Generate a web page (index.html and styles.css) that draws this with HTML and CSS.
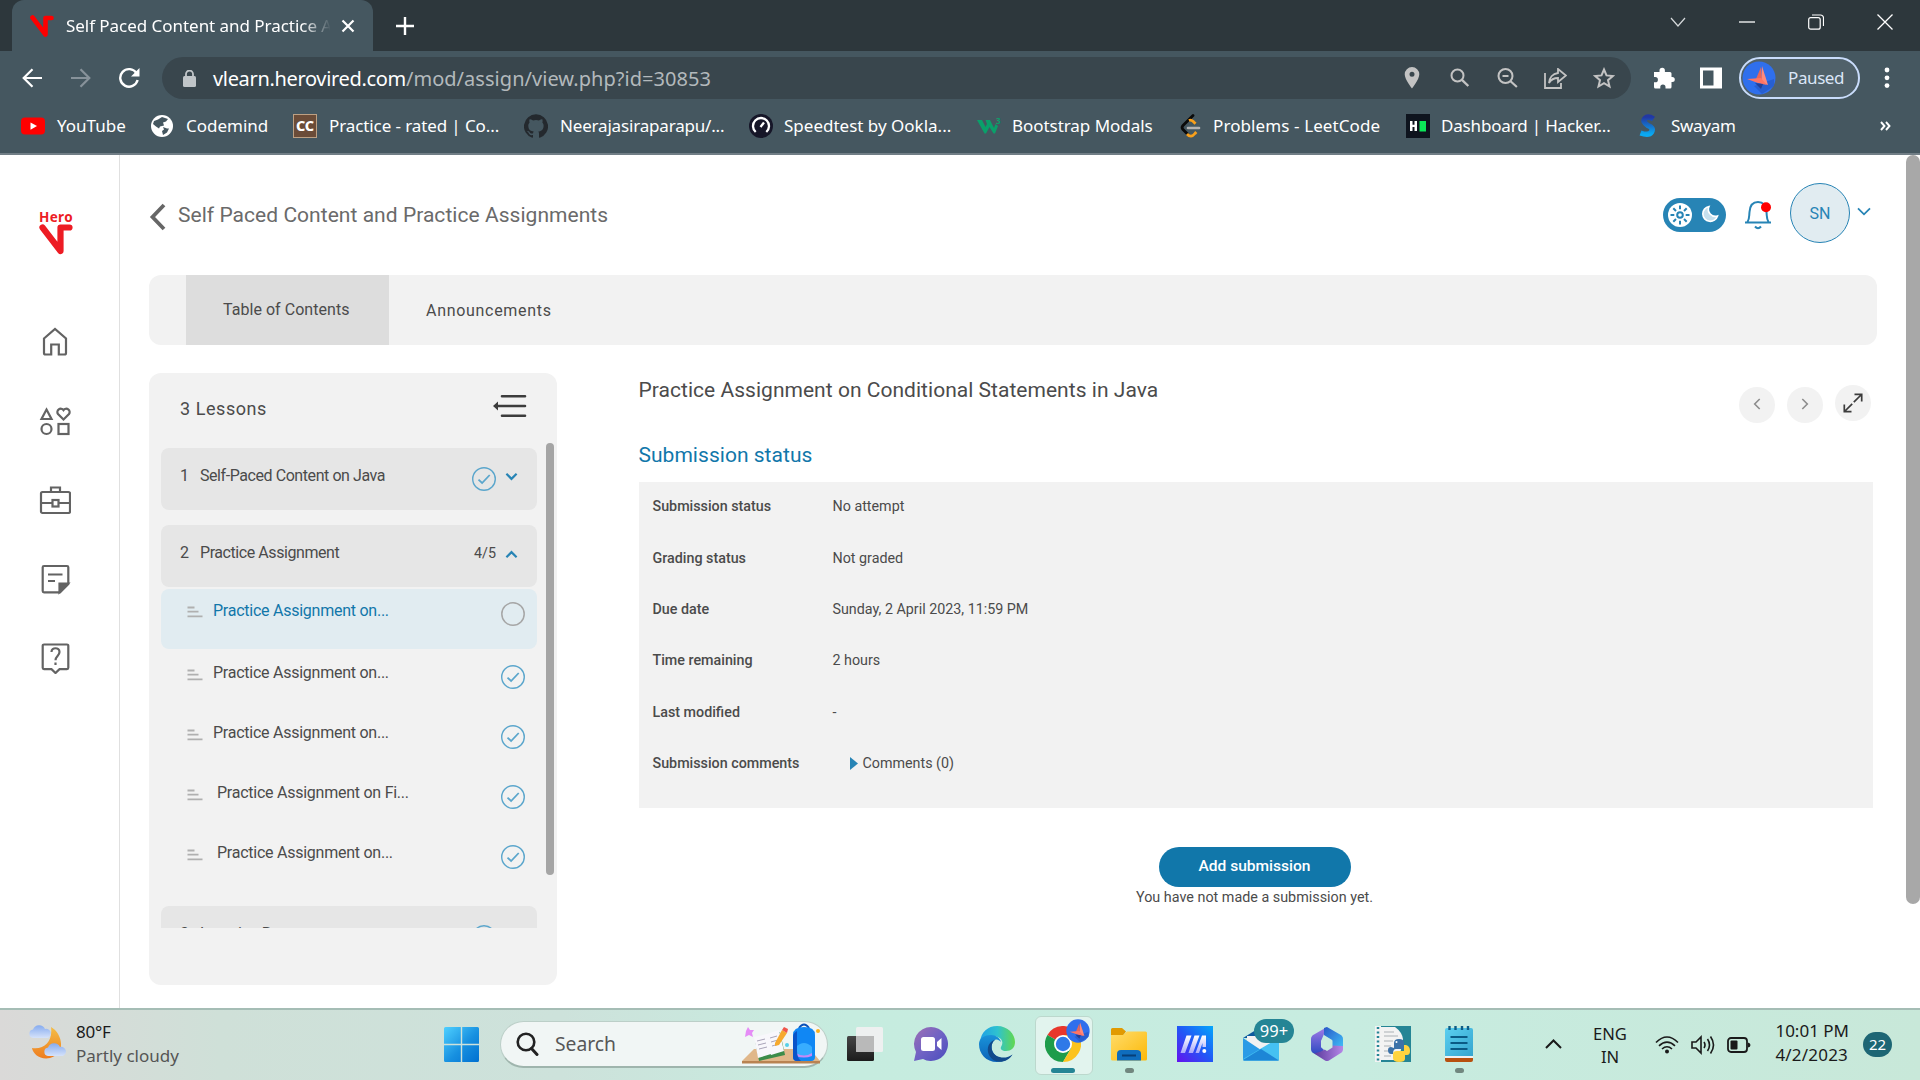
FILE: index.html
```
<!DOCTYPE html>
<html lang="en">
<head>
<meta charset="utf-8">
<title>Self Paced Content and Practice Assignments</title>
<link rel="stylesheet" href="styles.css">
</head>
<body>
<svg class="defs" width="0" height="0" aria-hidden="true">
  <symbol id="done" viewBox="0 0 24 24"><circle cx="12" cy="12" r="11.3" fill="none" stroke="#5ba6cc" stroke-width="1.4"/><path d="M6.5 12.6l3.6 3.4 7.6-8" fill="none" stroke="#5ba6cc" stroke-width="1.8"/></symbol>
  <symbol id="todo" viewBox="0 0 24 24"><circle cx="12" cy="12" r="11.2" fill="none" stroke="#a6a6a6" stroke-width="1.5"/></symbol>
  <symbol id="lines" viewBox="0 0 16 12"><path d="M.5 1.5h7M.5 5.7h11M.5 10.3h15" stroke="#b0b0b0" stroke-width="1.8" fill="none"/></symbol>
  <symbol id="bird" viewBox="0 0 34 34"><circle cx="17" cy="17" r="16.5" fill="#2f6fed"/><path d="M12 25l20-7v7L20 33z" fill="#285fd0"/><path d="M20 5l6 19-7-3z" fill="#ff8a7a"/><path d="M19 6l-5 12 6 5z" fill="#e8665a"/><path d="M5 18l14-1 6 7-9-2z" fill="#ff7464"/><path d="M13 22l8 1-2 5z" fill="#233f96"/></symbol>
</svg>

<header class="browser">
  <div class="tabstrip">
    <div class="tab">
      <svg width="24" height="22" viewBox="0 0 24 22"><path d="M2.5 2.5l13 17V3h6" fill="none" stroke="#fe0000" stroke-width="4.6" stroke-linecap="round" stroke-linejoin="round"/></svg>
      <span class="tab-title">Self Paced Content and Practice Assignments</span>
      <svg width="14" height="14" viewBox="0 0 14 14"><path d="M1.5 1.5l11 11M12.5 1.5l-11 11" stroke="#fff" stroke-width="2.2"/></svg>
    </div>
    <svg class="new-tab" width="18" height="18" viewBox="0 0 18 18"><path d="M9 0v18M0 9h18" stroke="#fff" stroke-width="2.4"/></svg>
    <div class="window-buttons">
      <svg width="16" height="16" viewBox="0 0 16 16"><path d="M1 4l7 8 7-8" fill="none" stroke="#d5d9db" stroke-width="1.2"/></svg>
      <svg width="16" height="16" viewBox="0 0 16 16"><path d="M0 8h16" stroke="#fff" stroke-width="1.3"/></svg>
      <svg width="16" height="16" viewBox="0 0 16 16"><rect x=".7" y="3.7" width="11.5" height="11.5" rx="2" fill="none" stroke="#fff" stroke-width="1.2"/><path d="M4 1h8.5a3 3 0 013 3v8" fill="none" stroke="#fff" stroke-width="1.2"/></svg>
      <svg width="16" height="16" viewBox="0 0 16 16"><path d="M.5.5l15 15M15.5.5l-15 15" stroke="#fff" stroke-width="1.3"/></svg>
    </div>
  </div>

  <div class="toolbar">
    <div class="nav">
      <svg width="21" height="20" viewBox="0 0 21 20"><path d="M20 10H2M10.5 1.2L1.7 10l8.800 8.800" fill="none" stroke="#fff" stroke-width="2.2"/></svg>
      <svg width="21" height="20" viewBox="0 0 21 20"><path d="M1 10h18M10.500 1.200l8.800 8.800-8.800 8.800" fill="none" stroke="#87929a" stroke-width="2.2"/></svg>
      <svg width="22" height="22" viewBox="0 0 22 22"><path d="M18.500 6.200A8.800 8.800 0 1019.600 13" fill="none" stroke="#fff" stroke-width="2.4"/><path d="M21.500 1v8.500H13z" fill="#fff"/></svg>
    </div>
    <div class="omnibox">
      <svg width="13" height="17" viewBox="0 0 13 17"><rect y="6" width="13" height="11" rx="1.500" fill="#c0c5c8"/><path d="M3 7V4a3.500 3.500 0 017 0v3" fill="none" stroke="#c0c5c8" stroke-width="1.800"/></svg>
      <div class="url"><span class="host">vlearn.herovired.com</span><span class="path">/mod/assign/view.php?id=30853</span></div>
      <div class="omni-icons">
        <svg width="20" height="22" viewBox="0 0 20 22"><path fill-rule="evenodd" d="M10 0a7.300 7.300 0 00-7.300 7.300c0 5.200 7.300 14.200 7.300 14.200s7.300-9 7.300-14.200A7.300 7.300 0 0010 0zm0 4.800a2.500 2.500 0 110 5 2.500 2.500 0 010-5z" fill="#c3c3c3"/></svg>
        <svg width="20" height="20" viewBox="0 0 20 20"><circle cx="7.500" cy="7.500" r="6" fill="none" stroke="#c3c3c3" stroke-width="2"/><path d="M11.700 11.700l6.600 6.300" stroke="#c3c3c3" stroke-width="2.400"/></svg>
        <svg width="22" height="20" viewBox="0 0 22 20"><circle cx="9.500" cy="8" r="7" fill="none" stroke="#c3c3c3" stroke-width="2"/><path d="M14.300 13l6.600 6M6.500 8h6" stroke="#c3c3c3" stroke-width="2.200"/></svg>
        <svg width="23" height="21" viewBox="0 0 23 21"><path d="M1 5v15h16v-5M14 1l8 6.500-8 6.500v-4c-4 0-7 1.500-9 5 .3-5 3.500-9.200 9-10z" fill="none" stroke="#c3c3c3" stroke-width="1.800"/></svg>
        <svg width="22" height="22" viewBox="0 0 22 22"><path d="M11 2.500l2.500 5.900 6.400.6-4.900 4.200 1.500 6.300-5.500-3.400-5.500 3.400L7 13.200 2.100 9l6.400-.6z" fill="none" stroke="#c3c3c3" stroke-width="2"/></svg>
      </div>
    </div>
    <svg class="puzzle" width="22" height="22" viewBox="0 0 22 22"><path d="M1 5h5.500V3.500a2.700 2.700 0 015.400 0V5H17a1.500 1.500 0 011.500 1.500V10h.8a2.500 2.500 0 010 5h-.8v5a1.500 1.500 0 01-1.500 1.500h-4.500V20a2.600 2.600 0 00-5.200 0v1.500H2.500A1.500 1.500 0 011 20v-4.700h1.300a2.600 2.600 0 000-5.200H1z" fill="#fff"/></svg>
    <svg width="22" height="22" viewBox="0 0 22 22"><path fill-rule="evenodd" d="M0 .5h22v21H0zM3 3.500v15h10.500v-15z" fill="#fff"/></svg>
    <div class="profile"><svg width="34" height="34"><use href="#bird"/></svg><span>Paused</span></div>
    <svg class="kebab" width="6" height="22" viewBox="0 0 6 22"><circle cx="3" cy="3" r="2.400" fill="#fff"/><circle cx="3" cy="10.800" r="2.400" fill="#fff"/><circle cx="3" cy="18.600" r="2.400" fill="#fff"/></svg>
  </div>

  <nav class="bookmarks">
    <a class="bm bm-youtube"><svg width="24" height="24" viewBox="0 0 24 24"><rect y="3.500" width="24" height="17" rx="4" fill="#f00"/><path d="M9.500 8.500l6.500 3.600-6.500 3.600z" fill="#fff"/></svg><span>YouTube</span></a>
    <a class="bm bm-codemind"><svg width="24" height="24" viewBox="0 0 24 24"><circle cx="12" cy="12" r="11" fill="#fff"/><path d="M12 3l6 2-2 2.500-3 1 1 3-4 1-1 2-3-2-3-2.500 1-3 4-1.500zM13 13l4 1.500 2 0-2 4-4 2.500-1-4 2-1.500z" fill="#455760"/></svg><span>Codemind</span></a>
    <a class="bm bm-codechef"><svg width="24" height="24" viewBox="0 0 24 24"><rect width="24" height="24" fill="#bda083"/><rect x="1" y="1" width="22" height="22" fill="#6b4c38"/><text x="12" y="17" text-anchor="middle" font-family="Noto Sans, sans-serif" font-size="14.500" font-weight="800" fill="#fff">CC</text></svg><span>Practice - rated | Co...</span></a>
    <a class="bm bm-github"><svg width="24" height="24" viewBox="0 0 24 24"><path d="M12 .3a12 12 0 00-3.800 23.400c.6.100.8-.3.800-.6v-2c-3.300.7-4-1.600-4-1.600-.6-1.400-1.400-1.800-1.400-1.800-1-.7.100-.7.100-.7 1.200 0 1.900 1.200 1.900 1.200 1 1.800 2.800 1.300 3.500 1 0-.8.400-1.300.7-1.600-2.700-.3-5.500-1.300-5.500-6 0-1.200.5-2.300 1.300-3.100-.2-.4-.6-1.600 0-3.200 0 0 1-.3 3.400 1.200a11.500 11.500 0 016 0c2.300-1.500 3.300-1.200 3.300-1.200.6 1.600.2 2.800 0 3.200.9.800 1.300 1.900 1.300 3.200 0 4.600-2.800 5.600-5.500 5.900.5.400.9 1 .9 2.200v3.300c0 .3.100.7.800.6A12 12 0 0012 .3" fill="#24292e"/></svg><span>Neerajasiraparapu/...</span></a>
    <a class="bm bm-speedtest"><svg width="24" height="24" viewBox="0 0 24 24"><circle cx="12" cy="12" r="12" fill="#161628"/><path d="M6.700 18a8 8 0 1110.600 0" fill="none" stroke="#fff" stroke-width="2.300"/><path d="M11.500 13l3.500-4.500" stroke="#fff" stroke-width="2.300"/></svg><span>Speedtest by Ookla...</span></a>
    <a class="bm bm-w3"><svg width="24" height="24" viewBox="0 0 24 24"><path d="M0 6h5l3.500 7L10 10 8.500 6H13l4 8 1.500-4 2.500 2-3 7.500h-1.500L12.500 13 9 19.500H7.500z" fill="#0aa06a"/><text x="19" y="10" font-family="Noto Sans, sans-serif" font-size="8" font-weight="700" fill="#0aa06a">3</text></svg><span>Bootstrap Modals</span></a>
    <a class="bm bm-leetcode"><svg width="24" height="24" viewBox="0 0 24 24"><path d="M15 1.500L5 11.500q-1.800 2 0 4l5 5" fill="none" stroke="#0a0a0a" stroke-width="2.800" stroke-linecap="round"/><path d="M11 6.500q2-1 4 .8l2.500 2.500M9 20q4 4.500 8-.5l1.300-1.500" fill="none" stroke="#f9a01b" stroke-width="2.800"/><path d="M10 14h11" stroke="#b3b3b3" stroke-width="2.600" stroke-linecap="round"/></svg><span>Problems - LeetCode</span></a>
    <a class="bm bm-hackerrank"><svg width="24" height="24" viewBox="0 0 24 24"><rect width="24" height="24" fill="#0e141e"/><path d="M4 7h2.500v3.700h2V7H11v10H8.500v-4h-2v4H4z" fill="#fff"/><rect x="13.500" y="7" width="6.500" height="10.500" fill="#0be658"/></svg><span>Dashboard | Hacker...</span></a>
    <a class="bm bm-swayam"><svg width="24" height="24" viewBox="0 0 24 24"><linearGradient id="sw" x2="0" y2="1"><stop stop-color="#2238a4"/><stop offset="1" stop-color="#0aa9f0"/></linearGradient><path d="M18.500 5Q13 1.500 10 4.500T13 11.500q6 2.500 3.500 6.500T5.500 19" fill="none" stroke="url(#sw)" stroke-width="5.500"/></svg><span>Swayam</span></a>
    <svg class="overflow" width="11" height="10" viewBox="0 0 11 10"><path d="M1 1l3.500 4L1 9M6 1l3.500 4L6 9" fill="none" stroke="#fff" stroke-width="1.900"/></svg>
  </nav>
</header>

<div class="page">
  <aside class="rail">
    <div class="logo">
      <span>Hero</span>
      <svg width="34" height="31" viewBox="0 0 34 31"><path d="M3.500 3.500l18 23.500V3.500h9" fill="none" stroke="#ed1c24" stroke-width="6.200" stroke-linecap="round" stroke-linejoin="round"/></svg>
    </div>
    <svg class="rail-icon" viewBox="0 0 32 32"><path d="M5 12.500L16 3l11 9.500V27a1.500 1.500 0 01-1.500 1.500h-5.700v-10h-7.600v10H6.500A1.500 1.500 0 015 27z"/></svg>
    <svg class="rail-icon" viewBox="0 0 32 32"><path d="M7.500 4.500l5 9.500h-10zM24.500 14.500l-5.500-5.400a3.300 3.300 0 015.500-4 3.300 3.300 0 015.500 4z"/><circle cx="7.500" cy="24" r="5"/><rect x="19.500" y="19" width="10" height="10"/></svg>
    <svg class="rail-icon" viewBox="0 0 32 32"><rect x="2" y="8" width="29" height="21" rx="1.500"/><path d="M12 8V3.500h9V8M2 19h11.500M19.500 19H31"/><rect x="13.500" y="16" width="6" height="6.500"/></svg>
    <svg class="rail-icon" viewBox="0 0 32 32"><path d="M5 3h23a1.300 1.300 0 011.300 1.300V21L21 29.300H5A1.300 1.300 0 013.700 28V4.300A1.300 1.300 0 015 3zM9 11.500h14.500M9 18h7"/><path d="M20.500 29v-8.500H29z" fill="#636363"/></svg>
    <svg class="rail-icon" viewBox="0 0 32 32"><path d="M5 2.500h23a1.300 1.300 0 011.300 1.300v22A1.300 1.300 0 0128 27.100h-7.500L16.500 31l-4-3.900H5a1.300 1.300 0 01-1.300-1.300v-22A1.300 1.300 0 015 2.500z"/><path d="M12.500 10c0-5 8-5 8 0 0 4-4 4-4 8.300M16.500 20.500V23"/></svg>
  </aside>

  <main class="main">
    <div class="head">
      <svg width="17" height="28" viewBox="0 0 17 28"><path d="M15 2L3.500 14 15 26" fill="none" stroke="#666" stroke-width="3.800"/></svg>
      <h1>Self Paced Content and Practice Assignments</h1>
      <div class="user">
        <div class="theme">
          <svg width="24" height="24" viewBox="0 0 24 24"><circle cx="12" cy="12" r="12" fill="#fff"/><g stroke="#2784b5" fill="none" stroke-width="2"><circle cx="12" cy="12" r="2.800"/><path d="M12 2.500v3.800M12 17.700v3.800M2.500 12h3.800M17.700 12h3.800M5.300 5.300L8 8M16 16l2.700 2.700M18.700 5.300L16 8M8 16l-2.700 2.700"/></g></svg>
          <svg width="18" height="18" viewBox="0 0 18 18"><path d="M8 1.500A7.500 7.500 0 1016.500 11 7 7 0 018 1.500z" fill="#c5e0ee" stroke="#fff" stroke-width="1.600"/></svg>
        </div>
        <svg class="bell" width="28" height="32" viewBox="0 0 28 32"><path d="M1 23.500h26M3.500 23c2-3 1.500-5 2-10C6 5.500 9 3 14 3s8 2.500 8.500 10c.5 5 0 7 2 10M11 27.500q3 3.500 6 0" fill="none" stroke="#2784b5" stroke-width="2"/><circle cx="22" cy="8.300" r="5" fill="#f00"/></svg>
        <div class="avatar">SN</div>
        <svg width="14" height="9" viewBox="0 0 14 9"><path d="M1 1.300l6 6 6-6" fill="none" stroke="#2784b5" stroke-width="1.800"/></svg>
      </div>
    </div>

    <nav class="course-tabs">
      <a class="active">Table of Contents</a>
      <a class="plain">Announcements</a>
    </nav>

    <div class="columns">
      <section class="lessons">
        <div class="lessons-head">
          <h2>3 Lessons</h2>
          <svg width="34" height="24" viewBox="0 0 34 24"><path d="M9 2.300h23M4 12h28M9 21.700h23" stroke="#3c3c3c" stroke-width="2.600" stroke-linecap="round"/><path d="M0 12l5-4.500v9z" fill="#3c3c3c"/></svg>
        </div>
        <div class="lessons-body">
          <div class="list">
            <div class="unit"><span class="num">1</span><span class="name">Self-Paced Content on Java</span><svg class="mark"><use href="#done"/></svg><svg class="caret" viewBox="0 0 12 8"><path d="M1.300 1.500L6 6.200l4.700-4.700"/></svg></div>
            <div class="unit open"><span class="num">2</span><span class="name">Practice Assignment</span><span class="count">4/5</span><svg class="caret up" viewBox="0 0 12 8"><path d="M1.300 6.500L6 1.800l4.700 4.700"/></svg></div>
            <div class="task current"><svg class="ln"><use href="#lines"/></svg><span>Practice Assignment on...</span><svg class="mark"><use href="#todo"/></svg></div>
            <div class="task"><svg class="ln"><use href="#lines"/></svg><span>Practice Assignment on...</span><svg class="mark"><use href="#done"/></svg></div>
            <div class="task"><svg class="ln"><use href="#lines"/></svg><span>Practice Assignment on...</span><svg class="mark"><use href="#done"/></svg></div>
            <div class="task inset"><svg class="ln"><use href="#lines"/></svg><span>Practice Assignment on Fi...</span><svg class="mark"><use href="#done"/></svg></div>
            <div class="task inset"><svg class="ln"><use href="#lines"/></svg><span>Practice Assignment on...</span><svg class="mark"><use href="#done"/></svg></div>
            <div class="unit last"><span class="num">3</span><span class="name">Learning Resources</span><svg class="mark"><use href="#done"/></svg><svg class="caret" viewBox="0 0 12 8"><path d="M1.300 1.500L6 6.200l4.700-4.700"/></svg></div>
          </div>
          <div class="list-thumb"></div>
        </div>
      </section>

      <article class="assignment">
        <div class="title-row">
          <h2>Practice Assignment on Conditional Statements in Java</h2>
          <div class="pager">
            <span class="round"><svg width="8" height="12" viewBox="0 0 8 12"><path d="M6.700 1L1.700 6l5 5" fill="none" stroke="#8d8d8d" stroke-width="1.600"/></svg></span>
            <span class="round"><svg width="8" height="12" viewBox="0 0 8 12"><path d="M1.300 1l5 5-5 5" fill="none" stroke="#8d8d8d" stroke-width="1.600"/></svg></span>
            <span class="round raised"><svg width="20" height="20" viewBox="0 0 20 20"><path d="M11.500 1.300h7.200v7.200M18.500 1.500l-7.700 7.700M1.300 11.500v7.200h7.200M1.500 18.500l7.700-7.700" fill="none" stroke="#3c3c3c" stroke-width="1.700"/></svg></span>
          </div>
        </div>
        <h3>Submission status</h3>
        <dl class="status">
          <dt>Submission status</dt><dd>No attempt</dd>
          <dt>Grading status</dt><dd>Not graded</dd>
          <dt>Due date</dt><dd>Sunday, 2 April 2023, 11:59 PM</dd>
          <dt>Time remaining</dt><dd>2 hours</dd>
          <dt>Last modified</dt><dd>-</dd>
          <dt>Submission comments</dt><dd class="comments"><svg width="8" height="13" viewBox="0 0 8 13"><path d="M0 0l8 6.500L0 13z" fill="#2784b5"/></svg>Comments (0)</dd>
        </dl>
        <div class="submit">
          <button type="button">Add submission</button>
          <p>You have not made a submission yet.</p>
        </div>
      </article>
    </div>
  </main>
  <div class="scrollbar"></div>
</div>

<footer class="taskbar">
  <div class="weather">
    <svg width="38" height="36" viewBox="0 0 38 36"><defs><linearGradient id="mo" x2="0" y2="1"><stop stop-color="#f4bd45"/><stop offset="1" stop-color="#ee7d20"/></linearGradient><linearGradient id="cl" x2="0" y2="1"><stop stop-color="#86abef"/><stop offset="1" stop-color="#d5e2fa"/></linearGradient></defs><path d="M23 3c11 6 16 26-1 31-10 2-17-4-18-10 13 2 21-8 19-21z" fill="url(#mo)"/><path d="M5 14a4.300 4.300 0 010-8.500A6.500 6.500 0 0117 5a4.600 4.600 0 012.500 9z" fill="url(#cl)"/><path d="M20 32a4.300 4.300 0 010-8.500 6.500 6.500 0 0112-.500 4.600 4.600 0 012.500 9z" fill="url(#cl)"/></svg>
    <div class="weather-text"><span class="temp">80°F</span><span class="sky">Partly cloudy</span></div>
  </div>

  <div class="apps">
    <svg class="start" width="35" height="35" viewBox="0 0 35 35"><defs><linearGradient id="wn" x2="1" y2="1"><stop stop-color="#4fd0ff"/><stop offset=".55" stop-color="#1790e0"/><stop offset="1" stop-color="#0070d0"/></linearGradient></defs><path d="M1.500 0h15.300v16.800H0V1.500A1.500 1.500 0 011.500 0zM18.200 0h15.300A1.500 1.500 0 0135 1.500v15.300H18.200zM0 18.200h16.800V35H1.500A1.500 1.500 0 010 33.500zM18.200 18.200H35v15.300a1.500 1.500 0 01-1.500 1.500H18.200z" fill="url(#wn)"/></svg>
    <div class="search">
      <svg width="23" height="24" viewBox="0 0 23 24"><circle cx="10" cy="10" r="8.300" fill="none" stroke="#222" stroke-width="2.600"/><path d="M15.500 16.500l5.500 6" stroke="#222" stroke-width="3" stroke-linecap="round"/></svg>
      <span>Search</span>
      <svg class="doodle" width="80" height="42" viewBox="0 0 80 42"><path d="M12 26h56l10 12H0z" fill="#e0b78a"/><path d="M0 38h78v2.500H0z" fill="#b98352"/><path d="M13 17l25-8 5 23-26 6z" fill="#3c8c4a"/><path d="M12 14l13-3 4 20-13 4zM25 11l12-4 5 21-13 4z" fill="#f8f7fb"/><path d="M15 18l8-2M16 22l8-2M17 26l8-2M28 15l7-2M29 19l7-2M30 23l7-2" stroke="#a9a4b8"/><path d="M33 20l7-13 5 3-8 12-4 1z" fill="#f6a92e"/><path d="M40 7l2-3 4 2-1 4z" fill="#f0554b"/><path d="M4 8l2-4 2 3 4 0-2 3 1 4-4-2-4 2z" fill="#e58cf6"/><circle cx="45" cy="22" r="2" fill="#56cfe8"/><circle cx="76" cy="8" r="2" fill="#fbb11c"/><path d="M57 5q5-7 10 0" fill="none" stroke="#0b50b8" stroke-width="2"/><path d="M51 34V12q0-8 11-8t11 8v22q0 4-4 4H55q-4 0-4-4z" fill="#1087f4"/><path d="M54 24q8-8 16 0v8q-8 3-16 0z" fill="#38adff"/><path d="M54 30q8 5 16 0v3q-8 3-16 0z" fill="#c589f7"/><path d="M51 14v20q0 4 4 4h4q-4-3-4-10V8q-4 2-4 6z" fill="#0a54c9"/></svg>
    </div>
    <div class="slot"><svg width="36" height="36" viewBox="0 0 36 36"><defs><linearGradient id="tv" x2="0" y2="1"><stop stop-color="#454545"/><stop offset="1" stop-color="#1c1c1c"/></linearGradient></defs><rect y="10" width="27" height="25" rx="1.500" fill="url(#tv)"/><rect x="9" y="1" width="27" height="25" rx="1.500" fill="#f0f0f0" opacity=".95"/><path d="M9 10h18v16H10q-1 0-1-1z" fill="#b9b9b9"/></svg></div>
    <div class="slot"><svg width="36" height="36" viewBox="0 0 36 36"><defs><linearGradient id="ch" x2="1" y2="1"><stop stop-color="#9f6fb4"/><stop offset=".5" stop-color="#6f62c4"/><stop offset="1" stop-color="#4a4cbd"/></linearGradient></defs><path d="M18 1a17 17 0 11-8 32l-9 2 2-9A17 17 0 0118 1z" fill="url(#ch)"/><rect x="8" y="11" width="14" height="14" rx="2.500" fill="#fff"/><path d="M24 16l4.500-4v12L24 20z" fill="#fff"/></svg></div>
    <div class="slot"><svg width="36" height="36" viewBox="0 0 36 36"><defs><linearGradient id="e1" x2="1"><stop stop-color="#1ea0e6"/><stop offset=".5" stop-color="#2fc2cf"/><stop offset="1" stop-color="#62d84e"/></linearGradient><linearGradient id="e2" x2="0" y2="1"><stop stop-color="#1a93d9"/><stop offset="1" stop-color="#0b62b8"/></linearGradient></defs><path d="M1 16C2 6 9 0 18 0c11 0 18 8 18 16 0 6-4 9-9 9-4 0-6-2-5-4 4-6-1-11-8-11-6 0-11 3-13 6z" fill="url(#e1)"/><path d="M0 18c0-6 6-9 12-9 5 0 9 3 10 7-2-2-4-3-6-2-3 2-4 6-3 10 2 6 8 9 14 8 3-.5 5-2 6.500-3.500C30 33 25 36 18 36 7 36 0 28 0 18z" fill="url(#e2)"/><path d="M13 24c-1-4 0-8 3-10-5 1-8 6-7 12 1 5 5 9 11 9.800C26 36 31 33 33.500 28.500 27 34 15 32 13 24z" fill="#114a8b"/></svg></div>
    <div class="slot chrome">
      <svg width="36" height="36" viewBox="0 0 36 36"><path d="M18 18L2.400 9A18 18 0 0133.600 9z" fill="#e8372c"/><path d="M18 18L2.400 9A18 18 0 0018 36l8-13.500z" fill="#1e9c4b"/><path d="M18 9h15.600A18 18 0 0118 36l8-13.500z" fill="#fcc31e"/><circle cx="18" cy="18" r="9" fill="#fff"/><circle cx="18" cy="18" r="7.200" fill="#2f79e8"/></svg>
      <svg class="chrome-badge" width="24" height="24" viewBox="0 0 34 34"><use href="#bird"/></svg>
      <i class="pill"></i>
    </div>
    <div class="slot running"><svg width="36" height="36" viewBox="0 0 36 36"><defs><linearGradient id="fo" x2="1" y2="1"><stop stop-color="#ffdc6b"/><stop offset="1" stop-color="#fcb908"/></linearGradient></defs><path d="M0 3.500A1.500 1.500 0 011.500 2H11l4 3.500-3 4H0z" fill="#e19a02"/><path d="M0 9h12l4-3.500h18.500A1.500 1.500 0 0136 7v26a1.500 1.500 0 01-1.500 1.500h-33A1.500 1.500 0 010 33z" fill="url(#fo)"/><path d="M6 34.500V28q0-4 4-4h16q4 0 4 4v6.500z" fill="#0f6dbd"/><path d="M11 29.500h14" stroke="#073f77" stroke-width="2"/></svg><i class="dot"></i></div>
    <div class="slot"><svg width="36" height="36" viewBox="0 0 36 36"><defs><linearGradient id="ma" x1="0" y1="1" x2="1" y2="0"><stop stop-color="#6411ee"/><stop offset=".5" stop-color="#2157f6"/><stop offset="1" stop-color="#04a7fb"/></linearGradient><linearGradient id="mb" x2="0" y2="1"><stop stop-color="#fff"/><stop offset="1" stop-color="#a9a8fb"/></linearGradient></defs><path d="M0 0h36v36H0z" fill="url(#ma)"/><path d="M3.500 27l6-17.500h5L8 27zM11.500 27l6-17.500h5L16 27zM18.500 27l6.500-17.500h4V21h-3.500v-4L22 27z" fill="url(#mb)"/><circle cx="27.300" cy="25" r="2" fill="#fff"/></svg></div>
    <div class="slot"><svg width="36" height="36" viewBox="0 0 36 36"><path d="M0 12L16 2h4l16 10z" fill="#0c5a9e"/><path d="M4 10h28v14H4z" fill="#f2f2f2"/><path d="M0 12l18 12 18-12v21q0 1.500-1.500 1.500h-33Q0 34.500 0 33z" fill="#2a9be6"/><path d="M0 33l36-21v21q0 1.500-1.500 1.500h-33Q0 34.500 0 33z" fill="#45c1f2"/><path d="M0 34l18-11 18 11.500H1z" fill="#1d86d6"/></svg><span class="mail-badge">99+</span></div>
    <div class="slot"><svg width="36" height="36" viewBox="0 0 36 36"><defs><linearGradient id="o1" x2="0" y2="1"><stop stop-color="#a57ce8"/><stop offset="1" stop-color="#2848c0"/></linearGradient><linearGradient id="o2" x2="1" y2="1"><stop stop-color="#2a58c8"/><stop offset="1" stop-color="#41c4fa"/></linearGradient><linearGradient id="o3" x2="1"><stop stop-color="#5a3a9c"/><stop offset="1" stop-color="#b687e8"/></linearGradient></defs><path d="M18 1L5 8.500Q2 10 2 13v10q0 3 3 4.500l4 1.500 6-5-3-3v-6z" fill="url(#o1)"/><path d="M15 2l3-1 13 7.500q3 1.500 3 4.500v11l-11-4v-6l-8-5z" fill="url(#o2)"/><path d="M34 20v3q0 3-3 4.500L20 34.500q-2 1-4 0L5 27.500l7-2 11-6z" fill="url(#o3)"/><path d="M18 11.500l5.500 3v7L18 25l-5.500-3.500v-7z" fill="#c9ecdf"/></svg></div>
    <div class="slot"><svg width="36" height="36" viewBox="0 0 36 36"><path d="M0 0h36v36H0z" fill="#258595"/><path d="M3 1h17q7 5 8 12l-4 21H3z" fill="#f3f3f3"/><path d="M0 0h6v36H0z" fill="#f3f3f3"/><path d="M3 1v34" stroke="#258595" stroke-width="2.500" stroke-dasharray="2 2.500"/><path d="M9 6h10M9 10h14M9 15h9M9 20h7M9 25h5M9 30h7" stroke="#c4c8ca" stroke-width="1.300"/><path d="M19 22v-5q0-4 5-4t5 4v6h-8q-3 0-3 5h-2q-3 0-3-4 0-3 3-3z" fill="#3c72a8"/><path d="M29 19h2q4 1 4 6 0 4-3 4h-2v4q0 3-6 3t-6-4v-4q0-3 4-3h7z" fill="#ffd33f"/><circle cx="21.500" cy="16" r="1" fill="#fff"/></svg></div>
    <div class="slot running"><svg width="36" height="36" viewBox="0 0 36 36"><defs><linearGradient id="np" x2="1" y2="1"><stop stop-color="#5bcff0"/><stop offset="1" stop-color="#35a5cf"/></linearGradient></defs><path d="M4 31h28v3q0 2-2 2H6q-2 0-2-2z" fill="#b7500f"/><path d="M4 28h28v4H4z" fill="#f0f0f0"/><path d="M4 4q0-2 2-2h24q2 0 2 2v26H4z" fill="url(#np)"/><path d="M9.500 11h17M9.500 17h17M9.500 23h17" stroke="#0a5a85" stroke-width="2"/><path d="M8.500 0v4M14.500 0v4M21 0v4M27 0v4" stroke="#0d5c86" stroke-width="2.400"/></svg><i class="dot"></i></div>
  </div>

  <div class="tray">
    <svg width="17" height="10" viewBox="0 0 17 10"><path d="M1 9l7.500-7.500L16 9" fill="none" stroke="#1a1a1a" stroke-width="2"/></svg>
    <div class="lang"><span>ENG</span><span>IN</span></div>
    <div class="status-icons">
      <svg width="24" height="18" viewBox="0 0 24 18"><g fill="none" stroke="#1a1a1a" stroke-width="1.600"><path d="M1 6.500q11-11 22 0M4 9.800q8-7.500 16 0M7 13q5-4.500 10 0"/></g><circle cx="12" cy="15.500" r="2" fill="#1a1a1a"/></svg>
      <svg width="24" height="20" viewBox="0 0 24 20"><path d="M1 7v6h4l5 5V2L5 7zM13 7q2 3 0 6M16.500 4q4 6 0 12M19.500 1.500q6 8.500 0 17" fill="none" stroke="#1a1a1a" stroke-width="1.600"/></svg>
      <svg width="24" height="16" viewBox="0 0 24 16"><rect x="1" y="1" width="19" height="14" rx="3" fill="none" stroke="#1a1a1a" stroke-width="1.800"/><rect x="3.500" y="3.500" width="7" height="9" rx="1" fill="#1a1a1a"/><path d="M21 5.500q2.500.5 2.500 2.500T21 10.500z" fill="#1a1a1a"/></svg>
    </div>
    <div class="clock"><span class="time">10:01 PM</span><span class="date">4/2/2023</span></div>
    <span class="notif">22</span>
  </div>
</footer>
</body>
</html>
```
FILE: styles.css
```
* { box-sizing: border-box; }
body { margin: 0; width: 1920px; height: 1080px; overflow: hidden; display: flex; flex-direction: column; background: #fff; font-family: Roboto, "Liberation Sans", sans-serif; color: #4b4b4b; white-space: nowrap; }
h1, h2, h3, p, dl, dd, dt { margin: 0; font-weight: 400; }
svg { display: block; flex: none; }
.defs { position: absolute; }

/* browser window */
.browser { height: 155px; flex: none; background: #455760; border-bottom: 2px solid #717e86; color: #fff; font: 17px/24px "Noto Sans", "Open Sans", sans-serif; }
.tabstrip { height: 51px; background: #2d373c; display: flex; align-items: center; padding-left: 12px; }
.tab { width: 361px; height: 51px; background: #455760; border-radius: 12px 12px 0 0; display: flex; align-items: center; padding: 0 18px 0 18px; }
.tab-title { width: 265px; margin: 0 11px 0 12px; letter-spacing: -.04px; overflow: hidden; -webkit-mask-image: linear-gradient(90deg, #000 236px, transparent 265px); mask-image: linear-gradient(90deg, #000 236px, transparent 265px); }
.new-tab { margin-left: 23px; }
.window-buttons { margin-left: auto; display: flex; gap: 53px; padding: 0 27px 8px 0; }
.toolbar { height: 54px; display: flex; align-items: center; }
.nav { width: 162px; padding-left: 22px; display: flex; gap: 27px; align-items: center; }
.omnibox { width: 1469px; height: 42px; border-radius: 21px; background: #39464d; display: flex; align-items: center; padding: 0 16px 0 21px; font-size: 20px; }
.url { margin: 2px 0 0 17px; flex: 1; display: flex; }
.host { letter-spacing: -.33px; }
.path { color: #b3b9bc; letter-spacing: .04px; }
.omni-icons { display: flex; gap: 26px; align-items: center; }
.omni-icons svg:first-child { margin-right: 2px; }
.puzzle { margin: 0 25px 0 22px; }
.profile { width: 121px; height: 42px; margin: 0 24px 0 17px; border: 2px solid #c9dcfb; border-radius: 21px; background: #50616a; display: flex; align-items: center; padding-left: 1px; color: #dbe6f8; }
.profile span { margin-left: 12px; letter-spacing: -.4px; }
.bookmarks { height: 48px; display: flex; align-items: center; padding: 0 29px 6px 21px; }
.bm { display: flex; gap: 12px; margin-right: 24px; align-items: center; }
.bm-codemind { width: 119px; }
.bm-github { letter-spacing: -.18px; width: 201px; }
.bm-codechef { width: 207px; letter-spacing: -.1px; }
.bm-youtube { width: 105px; }
.bm-speedtest { width: 204px; gap: 11px; }
.bm-w3 { width: 177px; letter-spacing: -.05px; gap: 11px; }
.bm-leetcode { width: 204px; letter-spacing: .1px; gap: 11px; }
.bm-hackerrank { width: 205px; letter-spacing: -.17px; gap: 11px; }
.bm-swayam { letter-spacing: -.3px; }
.overflow { margin-left: auto; }

/* page */
.page { height: 853px; flex: none; display: flex; }
.rail { width: 120px; border-right: 1px solid #e0e0e0; display: flex; flex-direction: column; align-items: center; padding: 56px 9px 0 0; gap: 47px; }
.logo { height: 68px; padding-left: 2px; display: flex; flex-direction: column; align-items: center; gap: 1px; color: #ed1c24; font: 700 13.5px/12px "Noto Sans", sans-serif; letter-spacing: .3px; }
.rail-icon { width: 32px; height: 32px; fill: none; stroke: #636363; stroke-width: 2.2; }
.main { flex: 1; padding-left: 29px; }
.head { height: 120px; display: flex; align-items: center; padding-right: 35px; }
.head > svg { margin-top: 3px; }
.head h1 { font-size: 21px; line-height: 26px; margin: 0 0 0 12px; color: #6a6a6a; letter-spacing: .04px; }
.user { margin-left: auto; display: flex; align-items: center; padding-bottom: 4px; }
.theme { width: 63px; height: 34px; margin-top: 4px; border-radius: 17px; background: #2784b5; display: flex; align-items: center; gap: 9px; padding-left: 5px; }
.theme svg:last-child { margin-bottom: 3px; }
.bell { margin: 3px 18px 0; }
.avatar { width: 60px; height: 60px; border: 1.4px solid #2784b5; border-radius: 50%; background: #e1ecf1; color: #2784b5; font-size: 16px; display: flex; align-items: center; justify-content: center; margin-right: 7px; }
.avatar + svg { margin-bottom: 4px; }
.course-tabs { width: 1728px; height: 70px; background: #f2f2f2; border-radius: 12px; padding-left: 37px; display: flex; font-size: 16px; line-height: 70px; }
.course-tabs .active { width: 203px; background: #ddd; padding-left: 37px; letter-spacing: .04px; }
.course-tabs .plain { padding: 1px 0 0 37px; letter-spacing: .7px; height: 70px; }
.columns { display: flex; gap: 82px; margin-top: 28px; }

.lessons { width: 408px; height: 612px; background: #f2f2f2; border-radius: 12px; padding-left: 12px; }
.lessons-head { height: 70px; display: flex; justify-content: space-between; align-items: flex-start; padding: 21px 30px 0 19px; }
.lessons-head h2 { font-size: 18px; line-height: 24px; margin-top: 3px; letter-spacing: .56px; }
.lessons-body { display: flex; justify-content: space-between; padding-right: 3px; }
.list { width: 376px; height: 480px; margin-top: 5px; overflow: hidden; }
.list-thumb { width: 8px; height: 432px; background: #a5a5a5; border-radius: 4px; }
.unit { height: 62px; margin-bottom: 15px; border-radius: 8px; background: #e6e6e6; display: flex; padding: 0 19px 0 19px; font-size: 16px; line-height: 20px; letter-spacing: -.43px; }
.unit .num { width: 20px; padding-top: 18px; }
.unit .name { flex: 1; padding-top: 18px; }
.unit .count { padding-top: 18px; font-size: 14.3px; letter-spacing: 0; }
.unit .mark { margin-top: 19px; }
.unit .caret { width: 13px; height: 9px; margin: 24px 0 0 9px; fill: none; stroke: #2784b5; stroke-width: 2; }
.unit .up { margin-top: 25px; }
.unit.open { margin-bottom: 2px; }
.unit.last { margin-top: 14px; }
.mark { width: 24px; height: 24px; }
.task { height: 60px; border-radius: 8px; display: flex; padding: 0 12px 0 26px; font-size: 16px; line-height: 20px; letter-spacing: -.25px; }
.task span { flex: 1; padding: 11px 0 0 10px; }
.task .mark { margin-top: 13px; }
.task .ln { width: 16px; height: 12px; margin-top: 17px; }
.task.current { background: #e1ecf1; color: #1177aa; margin-bottom: 3px; }
.task.current span { padding-top: 12px; }
.task.inset span { padding-left: 14px; }

.assignment { width: 1234px; margin-left: -.5px; }
.title-row { height: 68px; display: flex; justify-content: space-between; padding: 4px 2px 0 0; }
.title-row h2 { font-size: 21px; line-height: 26px; letter-spacing: .03px; }
.pager { display: flex; gap: 12px; padding-top: 10px; }
.round { width: 36px; height: 36px; border-radius: 50%; background: #f2f2f2; display: flex; align-items: center; justify-content: center; padding-bottom: 3px; }
.round.raised { margin-top: -2px; padding-bottom: 0; }
.assignment h3 { font-size: 21px; line-height: 26px; color: #1177aa; height: 41px; padding-top: 1px; letter-spacing: .03px; }
.status { height: 326px; background: #f2f2f2; display: grid; grid-template-columns: 180px 1fr; grid-auto-rows: 51.4px; padding: 14.3px 14px 0; font-size: 14.3px; line-height: 20px; }
.status dt { font-weight: 500; }
.status .comments { display: flex; align-items: center; gap: 5px; height: 20px; padding-left: 17px; }
.submit { width: 1232px; padding-top: 39px; display: flex; flex-direction: column; align-items: center; font-size: 14.35px; line-height: 20px; }
.submit button { width: 192px; height: 40px; border: 0; border-radius: 20px; background: #1177aa; color: #fff; font: 500 15.55px/37px Roboto, sans-serif; padding: 0 0 2px; }
.submit p { padding-top: 1px; }
.scrollbar { width: 14px; height: 749px; background: #a8a8a8; border-radius: 7px; }

/* taskbar */
.taskbar { height: 72px; border-top: 2px solid #a5bdb5; background: linear-gradient(90deg, #dad9d8 0, #cfe0d8 220px, #cde2db 560px, #c6ecdf 850px, #c7ece0 1350px, #c8e8d9 1920px); display: flex; color: #1a1a1a; font: 17px/24px "Noto Sans", "Open Sans", sans-serif; }
.weather { width: 444px; display: flex; padding: 14px 0 0 28px; gap: 10px; }
.weather-text { display: flex; flex-direction: column; margin-top: -4px; }
.temp { letter-spacing: -.2px; }
.sky { color: #555; }
.apps { display: flex; align-items: flex-start; }
.start { margin: 17px 21px 0 0; }
.search { width: 328px; height: 47px; margin: 11px 4px 0 0; border-radius: 24px; background: #f1f6f5; border: 1px solid #bccfc8; border-bottom: 2px solid #9fb5ad; display: flex; align-items: center; padding: 0 5px 0 15px; color: #575757; font-size: 19.3px; }
.search span { margin-left: 16px; flex: 1; }
.slot { width: 66px; height: 70px; padding-top: 16px; display: flex; justify-content: center; position: relative; }
.chrome::before { content: ""; position: absolute; left: 5px; top: 6px; width: 56px; height: 57px; border-radius: 6px; background: #e2f4ee; border: 1px solid #bcd8cd; }
.chrome svg { position: relative; }
.chrome .chrome-badge { position: absolute; left: 36px; top: 9px; }
.pill { position: absolute; left: 21px; top: 58px; width: 24px; height: 5px; border-radius: 3px; background: #258595; }
.dot { position: absolute; left: 29px; top: 58px; width: 9px; height: 5px; border-radius: 3px; background: #71877f; }
.mail-badge { position: absolute; left: 26px; top: 9px; width: 40px; height: 24px; border-radius: 12px; background: #258595; color: #fff; text-align: center; font-size: 16.5px; }
.tray { margin-left: auto; display: flex; align-items: center; padding: 0 28px 0 0; }
.tray > svg { margin-bottom: 2px; }
.lang { width: 50px; text-align: center; display: flex; flex-direction: column; margin: 0 20px 0 23px; font-size: 16.6px; line-height: 23px; }
.status-icons { display: flex; gap: 12px; align-items: center; margin-bottom: 1px; }
.clock { display: flex; flex-direction: column; width: 98px; text-align: right; margin: -4px 14px 0 0; }
.date { letter-spacing: .2px; padding-right: 1px; }
.notif { width: 29px; height: 25px; border-radius: 12.5px; background: #1d6674; color: #fff; text-align: center; font-size: 15px; line-height: 24px; margin-bottom: 2px; }
```
